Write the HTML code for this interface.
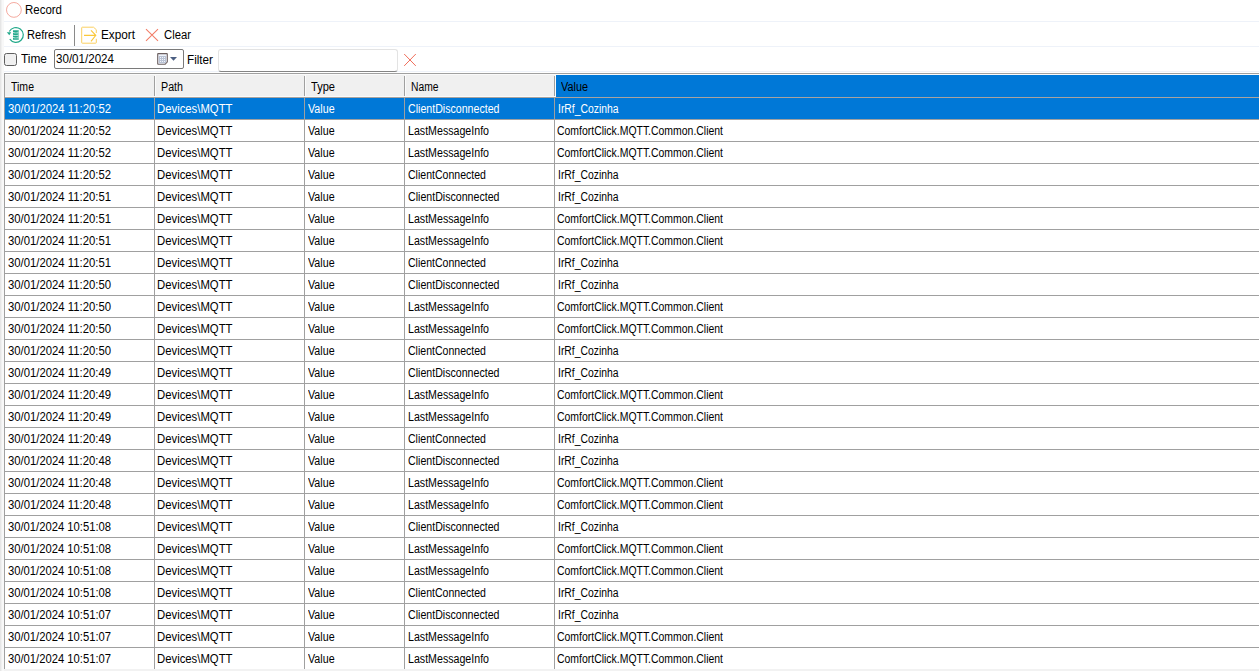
<!DOCTYPE html>
<html><head><meta charset="utf-8"><style>
html,body{margin:0;padding:0;background:#fff;width:1259px;height:671px;overflow:hidden;position:relative}
.t{position:absolute;font-family:"Liberation Sans",sans-serif;font-size:12px;line-height:14px;white-space:pre;transform-origin:0 0}
</style></head><body>
<div style="position:absolute;left:0;top:0;width:1px;height:671px;background:#e6e6e6"></div>
<div style="position:absolute;left:1px;top:0;width:1px;height:671px;background:#f0f0f0"></div>
<div style="position:absolute;left:2px;top:0;width:2px;height:671px;background:#f8f8f8"></div>
<div style="position:absolute;left:4px;top:21px;right:0;height:1px;background:#eef2f9"></div>
<div style="position:absolute;left:4px;top:46px;right:0;height:1px;background:#eef2f9"></div>
<div style="position:absolute;left:4px;top:71px;right:0;height:1px;background:#eef2f9"></div>
<svg style="position:absolute;left:0;top:0" width="40" height="21"><circle cx="13.9" cy="9.9" r="7.4" fill="none" stroke="#f5aa9f" stroke-width="1"/></svg>
<div class="t" style="left:24.70px;top:2.84px;color:#000;transform:scaleX(0.9564);">Record</div>
<svg style="position:absolute;left:0;top:22px" width="30" height="24" viewBox="0 22 30 24">
<path d="M9.3 31.6 A7.4 7.4 0 1 1 9.8 39.2" fill="none" stroke="#22a98b" stroke-width="1.2"/>
<path d="M6.8 32.2 L11.2 32.2 L9.3 35.2 Z" fill="#22a98b"/>
<g fill="#22a98b"><path d="M13 30.3 h5.8 v2 q-2.9 0.8 -5.8 0 z"/><path d="M13 32.9 q2.9 0.8 5.8 0 v1.9 q-2.9 0.8 -5.8 0 z"/><path d="M13 35.4 q2.9 0.8 5.8 0 v1.9 q-2.9 0.8 -5.8 0 z"/><path d="M13 37.9 q2.9 0.8 5.8 0 v1.9 h-5.8 z"/></g>
<rect x="17.8" y="30.3" width="1" height="9.5" fill="#8fd3c1"/>
</svg>
<div class="t" style="left:26.50px;top:27.84px;color:#000;transform:scaleX(0.9279);">Refresh</div>
<div style="position:absolute;left:74px;top:25px;width:1px;height:21px;background:#8a8a8a"></div>
<svg style="position:absolute;left:78px;top:22px" width="22" height="24" viewBox="78 22 22 24">
<path d="M96.3 33 L96.3 29.7 L93.5 27.2 L82.3 27.2 Q81.7 27.2 81.7 27.8 L81.7 42.6 Q81.7 43.2 82.3 43.2 L95.7 43.2 Q96.3 43.2 96.3 42.6 L96.3 38.8" fill="none" stroke="#fbd061" stroke-width="1"/>
<path d="M84 35.4 L95.6 35.4 M91 30.3 L95.8 35.4 L91 41.3" fill="none" stroke="#fbc83a" stroke-width="1.1"/>
</svg>
<div class="t" style="left:100.60px;top:27.84px;color:#000;transform:scaleX(0.9802);">Export</div>
<svg style="position:absolute;left:140px;top:22px" width="24" height="24" viewBox="140 22 24 24">
<path d="M146 29.2 L158 40.8 M158 29.2 L146 40.8" stroke="#f27d68" stroke-width="1.1" fill="none"/>
</svg>
<div class="t" style="left:163.80px;top:27.84px;color:#000;transform:scaleX(0.9412);">Clear</div>
<div style="position:absolute;left:4px;top:53px;width:11px;height:11px;border:1px solid #5f5f5f;border-radius:2.5px;background:#f0f0f0"></div>
<div class="t" style="left:20.60px;top:51.84px;color:#000;transform:scaleX(0.9911);">Time</div>
<div style="position:absolute;left:54px;top:49px;width:128px;height:18px;border:1px solid #7a7a7a;border-radius:2px;background:#fff"></div>
<div class="t" style="left:55.60px;top:51.84px;color:#000;transform:scaleX(0.9657);">30/01/2024</div>
<svg style="position:absolute;left:155px;top:50px" width="26" height="18" viewBox="155 50 26 18">
<path d="M158.2 53.6 h8.6 q0.5 0 0.5 0.5 v7.8 l-2.2 2.3 h-6.9 q-0.5 0 -0.5 -0.5 v-9.6 q0 -0.5 0.5 -0.5 z" fill="#eef2fa" stroke="#6b5f5f" stroke-width="1.1"/>
<path d="M167.6 62 l-2.5 2.6 l0 -2.6 z" fill="#8a8080"/>
<rect x="159" y="56" width="7" height="7" fill="#b9c2d4"/>
<g fill="#f2f5fa" shape-rendering="crispEdges"><rect x="160" y="57" width="1" height="1"/><rect x="162" y="57" width="1" height="1"/><rect x="164" y="57" width="1" height="1"/>
<rect x="160" y="59" width="1" height="1"/><rect x="162" y="59" width="1" height="1"/><rect x="164" y="59" width="1" height="1"/>
<rect x="160" y="61" width="1" height="1"/><rect x="162" y="61" width="1" height="1"/><rect x="164" y="61" width="1" height="1"/></g>
<path d="M170 57 L177 57 L173.5 60.8 Z" fill="#4b5f82"/>
</svg>
<div class="t" style="left:186.70px;top:52.84px;color:#000;transform:scaleX(0.9748);">Filter</div>
<div style="position:absolute;left:218px;top:49px;width:178px;height:21px;border:1px solid #e3e3e3;border-bottom:1px solid #848484;border-radius:3px;background:#fff"></div>
<svg style="position:absolute;left:400px;top:50px" width="20" height="20" viewBox="400 50 20 20">
<path d="M404.2 54 L415.8 65.9 M415.8 54 L404.2 65.9" stroke="#f06e5a" stroke-width="1" fill="none"/>
</svg>
<div style="position:absolute;left:4px;top:73px;right:0;height:1px;background:#a0a0a0"></div>
<div style="position:absolute;left:5px;top:74px;right:0;height:23px;background:#f0f0f0"></div>
<div style="position:absolute;left:5px;top:74px;right:0;height:1px;background:#fafafa"></div>
<div style="position:absolute;left:5px;top:96px;right:0;height:1px;background:#fafafa"></div>
<div style="position:absolute;left:4px;top:97px;right:0;height:1px;background:#a9a39f"></div>
<div style="position:absolute;left:556px;top:75px;right:0;height:22px;background:#0078d7"></div>
<div style="position:absolute;left:154px;top:76px;width:1px;height:20px;background:#a0a0a0"></div>
<div style="position:absolute;left:155px;top:75px;width:1px;height:22px;background:#fbfbfb"></div>
<div style="position:absolute;left:304px;top:76px;width:1px;height:20px;background:#a0a0a0"></div>
<div style="position:absolute;left:305px;top:75px;width:1px;height:22px;background:#fbfbfb"></div>
<div style="position:absolute;left:404px;top:76px;width:1px;height:20px;background:#a0a0a0"></div>
<div style="position:absolute;left:405px;top:75px;width:1px;height:22px;background:#fbfbfb"></div>
<div style="position:absolute;left:554px;top:76px;width:1px;height:20px;background:#a0a0a0"></div>
<div style="position:absolute;left:555px;top:75px;width:1px;height:22px;background:#fbfbfb"></div>
<div class="t" style="left:11.10px;top:79.84px;color:#000;transform:scaleX(0.8767);">Time</div>
<div class="t" style="left:161.20px;top:79.84px;color:#000;transform:scaleX(0.8911);">Path</div>
<div class="t" style="left:310.50px;top:79.84px;color:#000;transform:scaleX(0.9225);">Type</div>
<div class="t" style="left:410.90px;top:79.84px;color:#000;transform:scaleX(0.8590);">Name</div>
<div class="t" style="left:560.70px;top:79.84px;color:#000;transform:scaleX(0.9057);">Value</div>
<div style="position:absolute;left:4px;top:73px;width:1px;height:596px;background:#a0a0a0"></div>
<div style="position:absolute;left:5px;top:98px;right:0;height:21px;background:#0078d7"></div>
<div class="t" style="left:7.60px;top:101.84px;color:#fff;transform:scaleX(0.9431);">30/01/2024 11:20:52</div>
<div class="t" style="left:157.40px;top:101.84px;color:#fff;transform:scaleX(0.9436);">Devices\MQTT</div>
<div class="t" style="left:307.50px;top:101.84px;color:#fff;transform:scaleX(0.8922);">Value</div>
<div class="t" style="left:407.60px;top:101.84px;color:#fff;transform:scaleX(0.8850);">ClientDisconnected</div>
<div class="t" style="left:558.00px;top:101.84px;color:#fff;transform:scaleX(0.8639);">IrRf_Cozinha</div>
<div class="t" style="left:7.60px;top:123.84px;color:#000;transform:scaleX(0.9431);">30/01/2024 11:20:52</div>
<div class="t" style="left:157.40px;top:123.84px;color:#000;transform:scaleX(0.9436);">Devices\MQTT</div>
<div class="t" style="left:307.50px;top:123.84px;color:#000;transform:scaleX(0.8922);">Value</div>
<div class="t" style="left:407.60px;top:123.84px;color:#000;transform:scaleX(0.8863);">LastMessageInfo</div>
<div class="t" style="left:556.70px;top:123.84px;color:#000;transform:scaleX(0.8705);">ComfortClick.MQTT.Common.Client</div>
<div class="t" style="left:7.60px;top:145.84px;color:#000;transform:scaleX(0.9431);">30/01/2024 11:20:52</div>
<div class="t" style="left:157.40px;top:145.84px;color:#000;transform:scaleX(0.9436);">Devices\MQTT</div>
<div class="t" style="left:307.50px;top:145.84px;color:#000;transform:scaleX(0.8922);">Value</div>
<div class="t" style="left:407.60px;top:145.84px;color:#000;transform:scaleX(0.8863);">LastMessageInfo</div>
<div class="t" style="left:556.70px;top:145.84px;color:#000;transform:scaleX(0.8705);">ComfortClick.MQTT.Common.Client</div>
<div class="t" style="left:7.60px;top:167.84px;color:#000;transform:scaleX(0.9431);">30/01/2024 11:20:52</div>
<div class="t" style="left:157.40px;top:167.84px;color:#000;transform:scaleX(0.9436);">Devices\MQTT</div>
<div class="t" style="left:307.50px;top:167.84px;color:#000;transform:scaleX(0.8922);">Value</div>
<div class="t" style="left:407.60px;top:167.84px;color:#000;transform:scaleX(0.8790);">ClientConnected</div>
<div class="t" style="left:558.00px;top:167.84px;color:#000;transform:scaleX(0.8639);">IrRf_Cozinha</div>
<div class="t" style="left:7.60px;top:189.84px;color:#000;transform:scaleX(0.9431);">30/01/2024 11:20:51</div>
<div class="t" style="left:157.40px;top:189.84px;color:#000;transform:scaleX(0.9436);">Devices\MQTT</div>
<div class="t" style="left:307.50px;top:189.84px;color:#000;transform:scaleX(0.8922);">Value</div>
<div class="t" style="left:407.60px;top:189.84px;color:#000;transform:scaleX(0.8850);">ClientDisconnected</div>
<div class="t" style="left:558.00px;top:189.84px;color:#000;transform:scaleX(0.8639);">IrRf_Cozinha</div>
<div class="t" style="left:7.60px;top:211.84px;color:#000;transform:scaleX(0.9431);">30/01/2024 11:20:51</div>
<div class="t" style="left:157.40px;top:211.84px;color:#000;transform:scaleX(0.9436);">Devices\MQTT</div>
<div class="t" style="left:307.50px;top:211.84px;color:#000;transform:scaleX(0.8922);">Value</div>
<div class="t" style="left:407.60px;top:211.84px;color:#000;transform:scaleX(0.8863);">LastMessageInfo</div>
<div class="t" style="left:556.70px;top:211.84px;color:#000;transform:scaleX(0.8705);">ComfortClick.MQTT.Common.Client</div>
<div class="t" style="left:7.60px;top:233.84px;color:#000;transform:scaleX(0.9431);">30/01/2024 11:20:51</div>
<div class="t" style="left:157.40px;top:233.84px;color:#000;transform:scaleX(0.9436);">Devices\MQTT</div>
<div class="t" style="left:307.50px;top:233.84px;color:#000;transform:scaleX(0.8922);">Value</div>
<div class="t" style="left:407.60px;top:233.84px;color:#000;transform:scaleX(0.8863);">LastMessageInfo</div>
<div class="t" style="left:556.70px;top:233.84px;color:#000;transform:scaleX(0.8705);">ComfortClick.MQTT.Common.Client</div>
<div class="t" style="left:7.60px;top:255.84px;color:#000;transform:scaleX(0.9431);">30/01/2024 11:20:51</div>
<div class="t" style="left:157.40px;top:255.84px;color:#000;transform:scaleX(0.9436);">Devices\MQTT</div>
<div class="t" style="left:307.50px;top:255.84px;color:#000;transform:scaleX(0.8922);">Value</div>
<div class="t" style="left:407.60px;top:255.84px;color:#000;transform:scaleX(0.8790);">ClientConnected</div>
<div class="t" style="left:558.00px;top:255.84px;color:#000;transform:scaleX(0.8639);">IrRf_Cozinha</div>
<div class="t" style="left:7.60px;top:277.84px;color:#000;transform:scaleX(0.9431);">30/01/2024 11:20:50</div>
<div class="t" style="left:157.40px;top:277.84px;color:#000;transform:scaleX(0.9436);">Devices\MQTT</div>
<div class="t" style="left:307.50px;top:277.84px;color:#000;transform:scaleX(0.8922);">Value</div>
<div class="t" style="left:407.60px;top:277.84px;color:#000;transform:scaleX(0.8850);">ClientDisconnected</div>
<div class="t" style="left:558.00px;top:277.84px;color:#000;transform:scaleX(0.8639);">IrRf_Cozinha</div>
<div class="t" style="left:7.60px;top:299.84px;color:#000;transform:scaleX(0.9431);">30/01/2024 11:20:50</div>
<div class="t" style="left:157.40px;top:299.84px;color:#000;transform:scaleX(0.9436);">Devices\MQTT</div>
<div class="t" style="left:307.50px;top:299.84px;color:#000;transform:scaleX(0.8922);">Value</div>
<div class="t" style="left:407.60px;top:299.84px;color:#000;transform:scaleX(0.8863);">LastMessageInfo</div>
<div class="t" style="left:556.70px;top:299.84px;color:#000;transform:scaleX(0.8705);">ComfortClick.MQTT.Common.Client</div>
<div class="t" style="left:7.60px;top:321.84px;color:#000;transform:scaleX(0.9431);">30/01/2024 11:20:50</div>
<div class="t" style="left:157.40px;top:321.84px;color:#000;transform:scaleX(0.9436);">Devices\MQTT</div>
<div class="t" style="left:307.50px;top:321.84px;color:#000;transform:scaleX(0.8922);">Value</div>
<div class="t" style="left:407.60px;top:321.84px;color:#000;transform:scaleX(0.8863);">LastMessageInfo</div>
<div class="t" style="left:556.70px;top:321.84px;color:#000;transform:scaleX(0.8705);">ComfortClick.MQTT.Common.Client</div>
<div class="t" style="left:7.60px;top:343.84px;color:#000;transform:scaleX(0.9431);">30/01/2024 11:20:50</div>
<div class="t" style="left:157.40px;top:343.84px;color:#000;transform:scaleX(0.9436);">Devices\MQTT</div>
<div class="t" style="left:307.50px;top:343.84px;color:#000;transform:scaleX(0.8922);">Value</div>
<div class="t" style="left:407.60px;top:343.84px;color:#000;transform:scaleX(0.8790);">ClientConnected</div>
<div class="t" style="left:558.00px;top:343.84px;color:#000;transform:scaleX(0.8639);">IrRf_Cozinha</div>
<div class="t" style="left:7.60px;top:365.84px;color:#000;transform:scaleX(0.9431);">30/01/2024 11:20:49</div>
<div class="t" style="left:157.40px;top:365.84px;color:#000;transform:scaleX(0.9436);">Devices\MQTT</div>
<div class="t" style="left:307.50px;top:365.84px;color:#000;transform:scaleX(0.8922);">Value</div>
<div class="t" style="left:407.60px;top:365.84px;color:#000;transform:scaleX(0.8850);">ClientDisconnected</div>
<div class="t" style="left:558.00px;top:365.84px;color:#000;transform:scaleX(0.8639);">IrRf_Cozinha</div>
<div class="t" style="left:7.60px;top:387.84px;color:#000;transform:scaleX(0.9431);">30/01/2024 11:20:49</div>
<div class="t" style="left:157.40px;top:387.84px;color:#000;transform:scaleX(0.9436);">Devices\MQTT</div>
<div class="t" style="left:307.50px;top:387.84px;color:#000;transform:scaleX(0.8922);">Value</div>
<div class="t" style="left:407.60px;top:387.84px;color:#000;transform:scaleX(0.8863);">LastMessageInfo</div>
<div class="t" style="left:556.70px;top:387.84px;color:#000;transform:scaleX(0.8705);">ComfortClick.MQTT.Common.Client</div>
<div class="t" style="left:7.60px;top:409.84px;color:#000;transform:scaleX(0.9431);">30/01/2024 11:20:49</div>
<div class="t" style="left:157.40px;top:409.84px;color:#000;transform:scaleX(0.9436);">Devices\MQTT</div>
<div class="t" style="left:307.50px;top:409.84px;color:#000;transform:scaleX(0.8922);">Value</div>
<div class="t" style="left:407.60px;top:409.84px;color:#000;transform:scaleX(0.8863);">LastMessageInfo</div>
<div class="t" style="left:556.70px;top:409.84px;color:#000;transform:scaleX(0.8705);">ComfortClick.MQTT.Common.Client</div>
<div class="t" style="left:7.60px;top:431.84px;color:#000;transform:scaleX(0.9431);">30/01/2024 11:20:49</div>
<div class="t" style="left:157.40px;top:431.84px;color:#000;transform:scaleX(0.9436);">Devices\MQTT</div>
<div class="t" style="left:307.50px;top:431.84px;color:#000;transform:scaleX(0.8922);">Value</div>
<div class="t" style="left:407.60px;top:431.84px;color:#000;transform:scaleX(0.8790);">ClientConnected</div>
<div class="t" style="left:558.00px;top:431.84px;color:#000;transform:scaleX(0.8639);">IrRf_Cozinha</div>
<div class="t" style="left:7.60px;top:453.84px;color:#000;transform:scaleX(0.9431);">30/01/2024 11:20:48</div>
<div class="t" style="left:157.40px;top:453.84px;color:#000;transform:scaleX(0.9436);">Devices\MQTT</div>
<div class="t" style="left:307.50px;top:453.84px;color:#000;transform:scaleX(0.8922);">Value</div>
<div class="t" style="left:407.60px;top:453.84px;color:#000;transform:scaleX(0.8850);">ClientDisconnected</div>
<div class="t" style="left:558.00px;top:453.84px;color:#000;transform:scaleX(0.8639);">IrRf_Cozinha</div>
<div class="t" style="left:7.60px;top:475.84px;color:#000;transform:scaleX(0.9431);">30/01/2024 11:20:48</div>
<div class="t" style="left:157.40px;top:475.84px;color:#000;transform:scaleX(0.9436);">Devices\MQTT</div>
<div class="t" style="left:307.50px;top:475.84px;color:#000;transform:scaleX(0.8922);">Value</div>
<div class="t" style="left:407.60px;top:475.84px;color:#000;transform:scaleX(0.8863);">LastMessageInfo</div>
<div class="t" style="left:556.70px;top:475.84px;color:#000;transform:scaleX(0.8705);">ComfortClick.MQTT.Common.Client</div>
<div class="t" style="left:7.60px;top:497.84px;color:#000;transform:scaleX(0.9431);">30/01/2024 11:20:48</div>
<div class="t" style="left:157.40px;top:497.84px;color:#000;transform:scaleX(0.9436);">Devices\MQTT</div>
<div class="t" style="left:307.50px;top:497.84px;color:#000;transform:scaleX(0.8922);">Value</div>
<div class="t" style="left:407.60px;top:497.84px;color:#000;transform:scaleX(0.8863);">LastMessageInfo</div>
<div class="t" style="left:556.70px;top:497.84px;color:#000;transform:scaleX(0.8705);">ComfortClick.MQTT.Common.Client</div>
<div class="t" style="left:7.60px;top:519.84px;color:#000;transform:scaleX(0.9354);">30/01/2024 10:51:08</div>
<div class="t" style="left:157.40px;top:519.84px;color:#000;transform:scaleX(0.9436);">Devices\MQTT</div>
<div class="t" style="left:307.50px;top:519.84px;color:#000;transform:scaleX(0.8922);">Value</div>
<div class="t" style="left:407.60px;top:519.84px;color:#000;transform:scaleX(0.8850);">ClientDisconnected</div>
<div class="t" style="left:558.00px;top:519.84px;color:#000;transform:scaleX(0.8639);">IrRf_Cozinha</div>
<div class="t" style="left:7.60px;top:541.84px;color:#000;transform:scaleX(0.9354);">30/01/2024 10:51:08</div>
<div class="t" style="left:157.40px;top:541.84px;color:#000;transform:scaleX(0.9436);">Devices\MQTT</div>
<div class="t" style="left:307.50px;top:541.84px;color:#000;transform:scaleX(0.8922);">Value</div>
<div class="t" style="left:407.60px;top:541.84px;color:#000;transform:scaleX(0.8863);">LastMessageInfo</div>
<div class="t" style="left:556.70px;top:541.84px;color:#000;transform:scaleX(0.8705);">ComfortClick.MQTT.Common.Client</div>
<div class="t" style="left:7.60px;top:563.84px;color:#000;transform:scaleX(0.9354);">30/01/2024 10:51:08</div>
<div class="t" style="left:157.40px;top:563.84px;color:#000;transform:scaleX(0.9436);">Devices\MQTT</div>
<div class="t" style="left:307.50px;top:563.84px;color:#000;transform:scaleX(0.8922);">Value</div>
<div class="t" style="left:407.60px;top:563.84px;color:#000;transform:scaleX(0.8863);">LastMessageInfo</div>
<div class="t" style="left:556.70px;top:563.84px;color:#000;transform:scaleX(0.8705);">ComfortClick.MQTT.Common.Client</div>
<div class="t" style="left:7.60px;top:585.84px;color:#000;transform:scaleX(0.9354);">30/01/2024 10:51:08</div>
<div class="t" style="left:157.40px;top:585.84px;color:#000;transform:scaleX(0.9436);">Devices\MQTT</div>
<div class="t" style="left:307.50px;top:585.84px;color:#000;transform:scaleX(0.8922);">Value</div>
<div class="t" style="left:407.60px;top:585.84px;color:#000;transform:scaleX(0.8790);">ClientConnected</div>
<div class="t" style="left:558.00px;top:585.84px;color:#000;transform:scaleX(0.8639);">IrRf_Cozinha</div>
<div class="t" style="left:7.60px;top:607.84px;color:#000;transform:scaleX(0.9354);">30/01/2024 10:51:07</div>
<div class="t" style="left:157.40px;top:607.84px;color:#000;transform:scaleX(0.9436);">Devices\MQTT</div>
<div class="t" style="left:307.50px;top:607.84px;color:#000;transform:scaleX(0.8922);">Value</div>
<div class="t" style="left:407.60px;top:607.84px;color:#000;transform:scaleX(0.8850);">ClientDisconnected</div>
<div class="t" style="left:558.00px;top:607.84px;color:#000;transform:scaleX(0.8639);">IrRf_Cozinha</div>
<div class="t" style="left:7.60px;top:629.84px;color:#000;transform:scaleX(0.9354);">30/01/2024 10:51:07</div>
<div class="t" style="left:157.40px;top:629.84px;color:#000;transform:scaleX(0.9436);">Devices\MQTT</div>
<div class="t" style="left:307.50px;top:629.84px;color:#000;transform:scaleX(0.8922);">Value</div>
<div class="t" style="left:407.60px;top:629.84px;color:#000;transform:scaleX(0.8863);">LastMessageInfo</div>
<div class="t" style="left:556.70px;top:629.84px;color:#000;transform:scaleX(0.8705);">ComfortClick.MQTT.Common.Client</div>
<div class="t" style="left:7.60px;top:651.84px;color:#000;transform:scaleX(0.9354);">30/01/2024 10:51:07</div>
<div class="t" style="left:157.40px;top:651.84px;color:#000;transform:scaleX(0.9436);">Devices\MQTT</div>
<div class="t" style="left:307.50px;top:651.84px;color:#000;transform:scaleX(0.8922);">Value</div>
<div class="t" style="left:407.60px;top:651.84px;color:#000;transform:scaleX(0.8863);">LastMessageInfo</div>
<div class="t" style="left:556.70px;top:651.84px;color:#000;transform:scaleX(0.8705);">ComfortClick.MQTT.Common.Client</div>
<div style="position:absolute;left:4px;top:119px;right:0;height:1px;background:#a0a0a0"></div>
<div style="position:absolute;left:4px;top:141px;right:0;height:1px;background:#a0a0a0"></div>
<div style="position:absolute;left:4px;top:163px;right:0;height:1px;background:#a0a0a0"></div>
<div style="position:absolute;left:4px;top:185px;right:0;height:1px;background:#a0a0a0"></div>
<div style="position:absolute;left:4px;top:207px;right:0;height:1px;background:#a0a0a0"></div>
<div style="position:absolute;left:4px;top:229px;right:0;height:1px;background:#a0a0a0"></div>
<div style="position:absolute;left:4px;top:251px;right:0;height:1px;background:#a0a0a0"></div>
<div style="position:absolute;left:4px;top:273px;right:0;height:1px;background:#a0a0a0"></div>
<div style="position:absolute;left:4px;top:295px;right:0;height:1px;background:#a0a0a0"></div>
<div style="position:absolute;left:4px;top:317px;right:0;height:1px;background:#a0a0a0"></div>
<div style="position:absolute;left:4px;top:339px;right:0;height:1px;background:#a0a0a0"></div>
<div style="position:absolute;left:4px;top:361px;right:0;height:1px;background:#a0a0a0"></div>
<div style="position:absolute;left:4px;top:383px;right:0;height:1px;background:#a0a0a0"></div>
<div style="position:absolute;left:4px;top:405px;right:0;height:1px;background:#a0a0a0"></div>
<div style="position:absolute;left:4px;top:427px;right:0;height:1px;background:#a0a0a0"></div>
<div style="position:absolute;left:4px;top:449px;right:0;height:1px;background:#a0a0a0"></div>
<div style="position:absolute;left:4px;top:471px;right:0;height:1px;background:#a0a0a0"></div>
<div style="position:absolute;left:4px;top:493px;right:0;height:1px;background:#a0a0a0"></div>
<div style="position:absolute;left:4px;top:515px;right:0;height:1px;background:#a0a0a0"></div>
<div style="position:absolute;left:4px;top:537px;right:0;height:1px;background:#a0a0a0"></div>
<div style="position:absolute;left:4px;top:559px;right:0;height:1px;background:#a0a0a0"></div>
<div style="position:absolute;left:4px;top:581px;right:0;height:1px;background:#a0a0a0"></div>
<div style="position:absolute;left:4px;top:603px;right:0;height:1px;background:#a0a0a0"></div>
<div style="position:absolute;left:4px;top:625px;right:0;height:1px;background:#a0a0a0"></div>
<div style="position:absolute;left:4px;top:647px;right:0;height:1px;background:#a0a0a0"></div>
<div style="position:absolute;left:154px;top:98px;width:1px;height:571px;background:#a0a0a0"></div>
<div style="position:absolute;left:304px;top:98px;width:1px;height:571px;background:#a0a0a0"></div>
<div style="position:absolute;left:404px;top:98px;width:1px;height:571px;background:#a0a0a0"></div>
<div style="position:absolute;left:554px;top:98px;width:1px;height:571px;background:#a0a0a0"></div>
<div style="position:absolute;left:4px;top:669px;right:0;height:2px;background:#f2f2f2"></div>
</body></html>
